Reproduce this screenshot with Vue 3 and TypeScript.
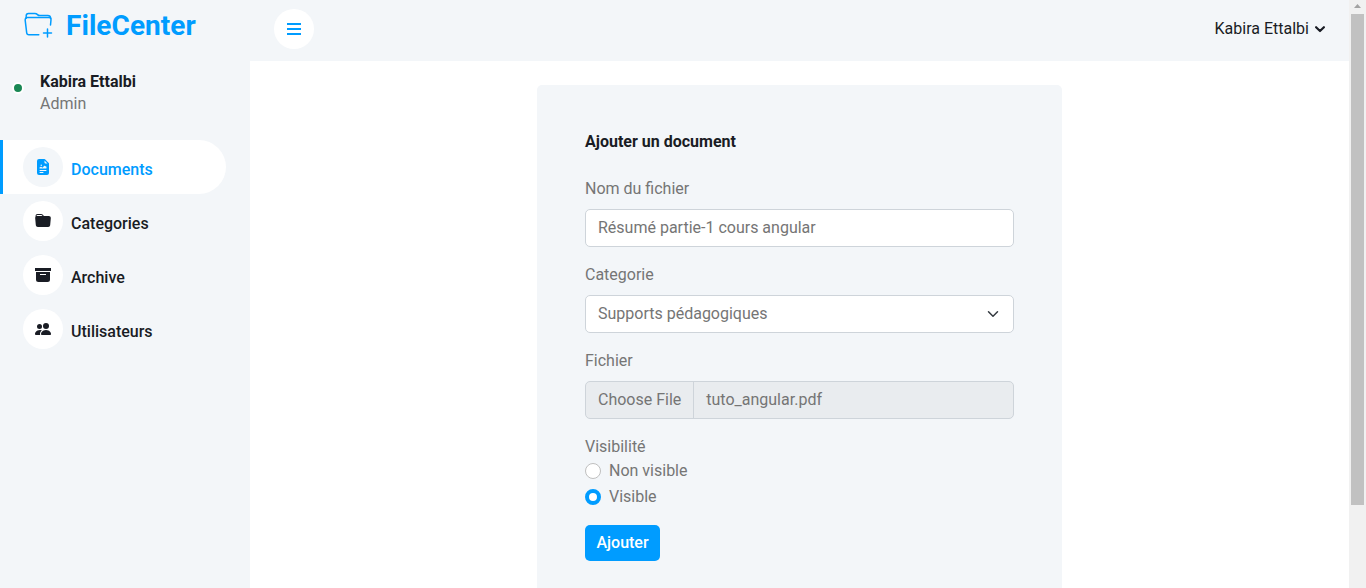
<script setup lang="ts">
import { ref } from 'vue'

interface NavItem {
  label: string
  icon: 'document' | 'folder' | 'archive' | 'users'
}

const items: NavItem[] = [
  { label: 'Documents', icon: 'document' },
  { label: 'Categories', icon: 'folder' },
  { label: 'Archive', icon: 'archive' },
  { label: 'Utilisateurs', icon: 'users' },
]
const active = ref('Documents')
const fileName = ref('Résumé partie-1 cours angular')
const visibility = ref('visible')
</script>

<template>
  <div class="page">
    <aside class="sidebar">
      <div class="brand">
        <svg class="brand-icon" width="30" height="26" viewBox="0 0 30 26" fill="none" stroke="#009cff" stroke-width="1.5" stroke-linecap="round" stroke-linejoin="round">
          <path d="M14.800 22.800H4.900c-1.300 0-2.100-.8-2.200-2L1.200 8.300C1.100 6.800 1.700 5.500 3.100 5.500h21.800c1.400 0 2.200.9 2.100 2.200l-.5 5.300" />
          <path d="M2.200 6.200V3.800C2.200 2.200 2.900 1.500 4.500 1.500h6.300c1.300 0 1.900.3 2.700 1.100.7.700 1.300 1 2.400 1h7.900c1.700 0 2.700.9 2.900 2.800" />
          <path d="M23.500 17v8M19.500 21h8" />
        </svg>
        <h3>FileCenter</h3>
      </div>
      <div class="profile">
        <span class="status"></span>
        <div>
          <h6>Kabira Ettalbi</h6>
          <span class="role">Admin</span>
        </div>
      </div>
      <nav>
        <a v-for="item in items" :key="item.label" class="nav-item" :class="{ active: item.label === active }" @click="active = item.label">
          <span class="circle">
            <svg v-if="item.icon === 'document'" width="16" height="16" viewBox="0 0 16 16" fill="currentColor">
              <path fill-rule="evenodd" d="M9.293 0H4a2 2 0 0 0-2 2v12a2 2 0 0 0 2 2h8a2 2 0 0 0 2-2V4.707A1 1 0 0 0 13.707 4L10 .293A1 1 0 0 0 9.293 0ZM9.500 3.500v-2l3 3h-2a1 1 0 0 1-1-1ZM7 6.250a.750.750 0 1 1-1.500 0 .750.750 0 0 1 1.500 0Zm-.861 1.542 1.330.886 1.854-1.855a.250.250 0 0 1 .289-.047l1.888.974V9a.500.500 0 0 1-.500.500H5a.500.500 0 0 1-.500-.500v-.500s1.540-1.274 1.639-.708ZM5 11h6a.500.500 0 0 1 0 1H5a.500.500 0 0 1 0-1Zm0 2h3a.500.500 0 0 1 0 1H5a.500.500 0 0 1 0-1Z" />
            </svg>
            <svg v-else-if="item.icon === 'folder'" width="16" height="16" viewBox="0 0 16 16" fill="currentColor">
              <path fill-rule="evenodd" d="M9.828 3h3.982a2 2 0 0 1 1.992 2.181l-.637 7A2 2 0 0 1 13.174 14H2.825a2 2 0 0 1-1.991-1.819l-.637-7a2 2 0 0 1 .342-1.310L.5 3a2 2 0 0 1 2-2h3.672a2 2 0 0 1 1.414.586l.828.828A2 2 0 0 0 9.828 3Zm-8.322.120C1.720 3.042 1.950 3 2.190 3h5.396l-.707-.707A1 1 0 0 0 6.172 2H2.500a1 1 0 0 0-1 .981l.006.139Z" />
            </svg>
            <svg v-else-if="item.icon === 'archive'" width="16" height="16" viewBox="0 0 16 16" fill="currentColor">
              <path fill-rule="evenodd" d="M0 1h16v3H0ZM1 5h14v7.500a2.500 2.500 0 0 1-2.500 2.500h-9A2.500 2.500 0 0 1 1 12.500ZM5 7v1h6V7Z" />
            </svg>
            <svg v-else width="16" height="16" viewBox="0 0 16 16" fill="currentColor">
              <circle cx="11" cy="5" r="3" />
              <path d="M7 14s-1 0-1-1 1-4 5-4 5 3 5 4-1 1-1 1H7Z" />
              <path d="M5.216 14A2.238 2.238 0 0 1 5 13c0-1.355.680-2.750 1.936-3.720A6.325 6.325 0 0 0 5 9c-4 0-5 3-5 4s1 1 1 1h4.216Z" />
              <circle cx="4.500" cy="5.500" r="2.500" />
            </svg>
          </span>
          <span class="nav-label">{{ item.label }}</span>
        </a>
      </nav>
    </aside>

    <div class="content">
      <header class="topbar">
        <button class="toggler" type="button" aria-label="Menu">
          <svg width="14" height="14" viewBox="0 0 14 14" fill="#009cff">
            <path d="M0 1h14v2H0ZM0 6h14v2H0ZM0 11h14v2H0Z" />
          </svg>
        </button>
        <div class="account">
          <span>Kabira Ettalbi</span>
          <svg width="10" height="8" viewBox="0 0 10 8" fill="none" stroke="#191c24" stroke-width="2.200" stroke-linecap="round" stroke-linejoin="round">
            <path d="M1.100 2.200 5 6l3.900-3.800" />
          </svg>
        </div>
      </header>

      <main>
        <form class="card" @submit.prevent>
          <h6>Ajouter un document</h6>
          <div class="field">
            <label for="name">Nom du fichier</label>
            <input id="name" v-model="fileName" class="control text" type="text" />
          </div>
          <div class="field">
            <label>Categorie</label>
            <div class="control select">
              <span>Supports pédagogiques</span>
              <svg width="16" height="12" viewBox="0 0 16 16" fill="none" stroke="#343a40" stroke-width="2" stroke-linecap="round" stroke-linejoin="round">
                <path d="m2 5 6 6 6-6" />
              </svg>
            </div>
          </div>
          <div class="field">
            <label>Fichier</label>
            <div class="control file">
              <span class="choose">Choose File</span>
              <span class="file-name">tuto_angular.pdf</span>
            </div>
          </div>
          <div class="visibility">
            <div>Visibilité</div>
            <label class="check"><input v-model="visibility" type="radio" name="visibility" value="hidden" />Non visible</label>
            <label class="check"><input v-model="visibility" type="radio" name="visibility" value="visible" />Visible</label>
          </div>
          <button class="submit" type="submit">Ajouter</button>
        </form>
      </main>
    </div>

    <div class="scrollbar">
      <svg width="17" height="14" viewBox="0 0 17 14"><path d="M5 8 8.500 4 12 8Z" fill="#a3a3a3" /></svg>
      <div class="thumb"></div>
    </div>
  </div>
</template>

<style>
html,
body {
  margin: 0;
  overflow: hidden;
}
</style>

<style scoped>
* {
  box-sizing: border-box;
}
.page {
  display: flex;
  height: 588px;
  overflow: hidden;
  background: #fff;
  color: #757575;
  font: 400 16px/24px Roboto, sans-serif;
}
h3,
h6 {
  margin: 0;
  color: #191c24;
  font-size: 16px;
  line-height: 19px;
  font-weight: 700;
}
.sidebar {
  flex: 0 0 250px;
  background: #f3f6f9;
}
.brand {
  display: flex;
  height: 72px;
  padding: 9px 0 0 24px;
}
.brand-icon {
  margin-top: 3px;
}
.brand h3 {
  margin-left: 12px;
  color: #009cff;
  font-size: 28px;
  line-height: 34px;
  letter-spacing: 0.05px;
}
.profile {
  display: flex;
  height: 68px;
  padding-left: 12px;
}
.status {
  width: 12px;
  height: 12px;
  margin: 10px 16px 0 0;
  border: 2px solid #fff;
  border-radius: 50%;
  background: #198754;
}
.role {
  display: block;
  margin-top: 1px;
}
.nav-item {
  display: flex;
  height: 54px;
  width: 226px;
  padding: 7px 0 0 20px;
  border-left: 3px solid #f3f6f9;
  border-radius: 0 30px 30px 0;
  color: #191c24;
  font-weight: 500;
  cursor: pointer;
}
.circle {
  display: flex;
  width: 40px;
  height: 40px;
  align-items: center;
  justify-content: center;
  border-radius: 50%;
  background: #fff;
}
.nav-label {
  margin: 11px 0 0 8px;
}
.nav-item.active {
  border-color: #009cff;
  background: #fff;
  color: #009cff;
}
.active .circle {
  background: #f3f6f9;
}
.content {
  flex: 1;
  min-width: 0;
}
.topbar {
  display: flex;
  height: 61px;
  padding: 9px 24px 0;
  justify-content: space-between;
  background: #f3f6f9;
}
.toggler {
  display: flex;
  width: 40px;
  height: 40px;
  padding: 0;
  align-items: center;
  justify-content: center;
  border: 0;
  border-radius: 50%;
  background: #fff;
}
.account {
  display: flex;
  height: 40px;
  align-items: center;
  gap: 6px;
  color: #191c24;
}
main {
  display: flex;
  justify-content: center;
  padding-top: 24px;
}
.card {
  width: 525px;
  height: 540px;
  padding: 47px 48px 48px;
  border-radius: 5px;
  background: #f3f6f9;
}
.card h6 {
  margin-bottom: 26px;
}
.field {
  margin-bottom: 16px;
}
.field label {
  display: block;
  margin-bottom: 8px;
}
.control {
  display: flex;
  width: 100%;
  height: 38px;
  padding: 6px 12px;
  border: 1px solid #ced4da;
  border-radius: 5px;
  background: #fff;
  color: #757575;
  font: inherit;
  outline: none;
}
.text {
  padding: 5px 12px 7px;
}
.select {
  align-items: center;
  justify-content: space-between;
}
.file {
  padding: 0;
  background: #e9ecef;
  line-height: 36px;
}
.choose {
  padding: 0 12px;
  border-right: 1px solid #ced4da;
}
.file-name {
  padding-left: 12px;
}
.check {
  display: flex;
  height: 24px;
  align-items: center;
  margin-bottom: 2px;
}
.check input {
  appearance: none;
  width: 16px;
  height: 16px;
  margin: 0 8px 0 0;
  border: 1px solid #bfbfbf;
  border-radius: 50%;
  background: #fff;
}
.check input:checked {
  border: 4px solid #009cff;
}
.submit {
  display: block;
  width: 75px;
  height: 36px;
  margin-top: 16px;
  padding: 0;
  border: 0;
  border-radius: 5px;
  background: #009cff;
  color: #fff;
  font: 500 16px/36px Roboto, sans-serif;
}
.check:last-child {
  margin-bottom: 0;
}
.scrollbar {
  flex: 0 0 17px;
  background: #f1f1f1;
}
.scrollbar svg {
  display: block;
}
.thumb {
  width: 13px;
  height: 491px;
  margin-left: 2px;
  background: #c1c1c1;
}
</style>
